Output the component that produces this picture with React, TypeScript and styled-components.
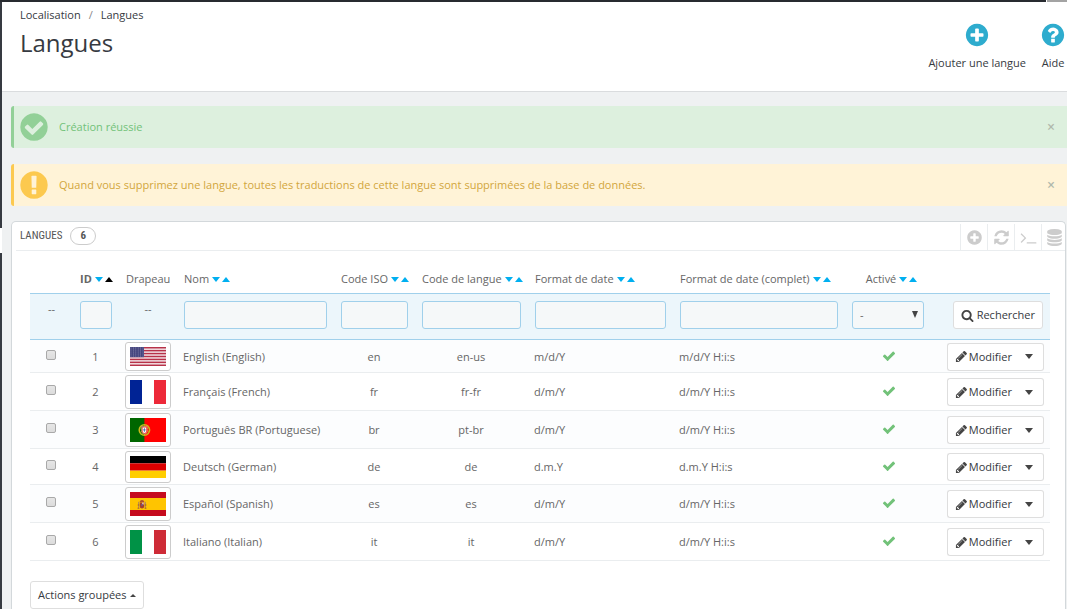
import React from "react";
import styled, { createGlobalStyle, css } from "styled-components";

const GlobalStyle = createGlobalStyle`
  *, *::before, *::after { box-sizing: border-box; }
  body {
    margin: 0;
    background: #eff1f2;
    color: #666;
    font: 11px/16px "Open Sans", "Noto Sans", sans-serif;
  }
  button, input, select { font: inherit; color: inherit; margin: 0; }
  a { color: inherit; text-decoration: none; }
`;

/* ---------- icons ---------- */

const DISC =
  "q0 209-103 385.5t-279.5 279.5-385.5 103-385.5-103-279.5-279.5-103-385.5 103-385.5 279.5-279.5 385.5-103 385.5 103 279.5 279.5 103 385.5z";

const ICONS = {
  plus:
    "M1344 960v-128q0-26-19-45t-45-19h-256v-256q0-26-19-45t-45-19h-128q-26 0-45 19t-19 45v256h-256q-26 0-45 19t-19 45v128q0 26 19 45t45 19h256v256q0 26 19 45t45 19h128q26 0 45-19t19-45v-256h256q26 0 45-19t19-45zm320-64" + DISC,
  question:
    "M1024 1376v-192q0-14-9-23t-23-9h-192q-14 0-23 9t-9 23v192q0 14 9 23t23 9h192q14 0 23-9t9-23zm256-672q0-88-55.5-163t-138.5-116-170-41q-243 0-371 213-15 24 8 42l132 100q7 6 19 6 16 0 25-12 53-68 86-92 34-24 86-24 48 0 85.5 26t37.5 59q0 38-20 61t-68 45q-63 28-115.5 86.5t-52.5 125.5v36q0 14 9 23t23 9h192q14 0 23-9t9-23q0-19 21.5-49.5t54.5-49.5q32-18 49-28.5t46-35 44.5-48 28-60.5 12.5-81zm384 192" + DISC,
  checkCircle:
    "M1412 734q0-28-18-46l-91-90q-19-19-45-19t-45 19l-408 407-226-226q-19-19-45-19t-45 19l-91 90q-18 18-18 46 0 27 18 45l362 362q19 19 45 19 27 0 46-19l543-543q18-18 18-45zm252 162" + DISC,
  exclamation:
    "M896 128q209 0 385.5 103t279.5 279.5 103 385.5-103 385.5-279.5 279.5-385.5 103-385.5-103-279.5-279.5-103-385.5 103-385.5 279.5-279.5 385.5-103zm128 1247v-190q0-14-9-23.5t-22-9.5h-192q-13 0-23 10t-10 23v190q0 13 10 23t23 10h192q13 0 22-9.5t9-23.5zm-2-344l18-621q0-12-10-18-10-8-24-8h-220q-14 0-24 8-10 6-10 18l17 621q0 10 10 17.5t24 7.5h185q14 0 23.5-7.5t10.5-17.5z",
  refresh:
    "M1639 1056q0 5-1 7-64 268-268 434.5t-478 166.5q-146 0-282.5-55t-243.5-157l-129 129q-19 19-45 19t-45-19-19-45v-448q0-26 19-45t45-19h448q26 0 45 19t19 45-19 45l-137 137q71 66 161 102t187 36q134 0 250-65t186-179q11-17 53-117 8-23 30-23h192q13 0 22.5 9.5t9.5 22.5zm25-800v448q0 26-19 45t-45 19h-448q-26 0-45-19t-19-45 19-45l138-138q-148-137-349-137-134 0-250 65t-186 179q-11 17-53 117-8 23-30 23h-199q-13 0-22.5-9.5t-9.5-22.5v-7q65-268 270-434.5t480-166.5q146 0 284 55.5t245 156.5l130-129q19-19 45-19t45 19 19 45z",
  terminal:
    "M649 983l-466 466q-10 10-23 10t-23-10l-50-50q-10-10-10-23t10-23l393-393-393-393q-10-10-10-23t10-23l50-50q10-10 23-10t23 10l466 466q10 10 10 23t-10 23zm1079 457v64q0 14-9 23t-23 9h-960q-14 0-23-9t-9-23v-64q0-14 9-23t23-9h960q14 0 23 9t9 23z",
  database:
    "M896 768q237 0 443-43t325-127v170q0 69-103 128t-280 93.5-385 34.5-385-34.5-280-93.5-103-128v-170q119 84 325 127t443 43zm0 768q237 0 443-43t325-127v170q0 69-103 128t-280 93.5-385 34.5-385-34.5-280-93.5-103-128v-170q119 84 325 127t443 43zm0-384q237 0 443-43t325-127v170q0 69-103 128t-280 93.5-385 34.5-385-34.5-280-93.5-103-128v-170q119 84 325 127t443 43zm0-1152q208 0 385 34.5t280 93.5 103 128v128q0 69-103 128t-280 93.5-385 34.5-385-34.5-280-93.5-103-128v-128q0-69 103-128t280-93.5 385-34.5z",
  search:
    "M1216 832q0-185-131.5-316.5t-316.5-131.5-316.5 131.5-131.5 316.5 131.5 316.5 316.5 131.5 316.5-131.5 131.5-316.5zm512 832q0 52-38 90t-90 38q-54 0-90-38l-343-342q-179 124-399 124-143 0-273.5-55.5t-225-150-150-225-55.5-273.5 55.5-273.5 150-225 225-150 273.5-55.5 273.5 55.5 225 150 150 225 55.5 273.5q0 220-124 399l343 343q37 37 37 90z",
  pencil:
    "M491 1536l91-91-235-235-91 91v107h128v128h107zm523-928q0-22-22-22-10 0-17 7l-542 542q-7 7-7 17 0 22 22 22 10 0 17-7l542-542q7-7 7-17zm-54-192l416 416-832 832h-416v-416zm683 96q0 53-37 90l-166 166-416-416 166-165q36-38 90-38 53 0 91 38l235 234q37 39 37 91z",
  check:
    "M1671 566q0 40-28 68l-724 724-136 136q-28 28-68 28t-68-28l-136-136-362-362q-28-28-28-68t28-68l136-136q28-28 68-28t68 28l294 295 656-657q28-28 68-28t68 28l136 136q28 28 28 68z",
};

const IconSvg = styled.svg`
  display: block;
  flex: none;
  fill: currentColor;
`;

function Icon({ name, size }: { name: keyof typeof ICONS; size: number }) {
  return (
    <IconSvg width={size} height={size} viewBox="0 0 1792 1792" aria-hidden="true">
      <path d={ICONS[name]} />
    </IconSvg>
  );
}

function Caret({ up, width = 8, height = 5 }: { up?: boolean; width?: number; height?: number }) {
  return (
    <IconSvg width={width} height={height} viewBox="0 0 8 4" preserveAspectRatio="none" aria-hidden="true">
      <path d={up ? "M0 4L4 0L8 4z" : "M0 0H8L4 4z"} />
    </IconSvg>
  );
}

/* ---------- page frame ---------- */

const Page = styled.div`
  display: flex;
  flex-direction: column;
  min-height: 100vh;
`;

const TopBar = styled.div`
  display: flex;
  justify-content: flex-end;
  height: 2px;
  background: #282b30;
`;

const TopBarEnd = styled.div`
  width: 21px;
  background: #a3a3a3;
  border-left: 1px solid #fff;
`;

const Body = styled.div`
  flex: 1;
  display: flex;
`;

const Rail = styled.div`
  flex: none;
  width: 2px;
  display: flex;
  flex-direction: column;
  background: #363a41;
`;

const RailMarker = styled.div`
  height: 25px;
  margin-top: 226px;
  background: #fff;
`;

const Main = styled.div`
  flex: 1;
  min-width: 0;
  display: flex;
  flex-direction: column;
`;

const Header = styled.header`
  display: flex;
  justify-content: space-between;
  height: 90px;
  padding: 5px 1px 0 18px;
  background: #fff;
  border-bottom: 1px solid #dadcde;
  color: #363a41;
`;

const Breadcrumb = styled.nav`
  display: flex;
  gap: 8px;
`;

const Slash = styled.span`
  color: #888;
`;

const Title = styled.h1`
  margin: 4px 0 0;
  font-size: 24px;
  line-height: 32px;
  font-weight: 400;
`;

const HeaderActions = styled.div`
  display: flex;
  align-items: flex-start;
  gap: 14px;
  padding-top: 15px;
`;

const HeaderAction = styled.a`
  display: flex;
  flex-direction: column;
  align-items: center;
  gap: 7px;
  svg { color: #2eacce; }
`;

const Content = styled.main`
  flex: 1;
  display: flex;
  flex-direction: column;
  padding: 14px 0 0 9px;
`;

/* ---------- alerts ---------- */

const tones = {
  success: css`
    background: #ddf0de;
    border-color: #92d097;
    color: #72c279;
    > svg { color: #92d097; }
  `,
  warning: css`
    background: #fff3d7;
    border-color: #fcc94f;
    color: #d2a63c;
    > svg { color: #fcc94f; }
  `,
};

const Alerts = styled.div`
  display: grid;
  gap: 16px;
  margin-bottom: 15px;
`;

const AlertBox = styled.div<{ $tone: keyof typeof tones }>`
  display: flex;
  align-items: center;
  height: 42px;
  padding: 0 10px 0 4px;
  border-left: 3px solid;
  border-radius: 3px 0 0 3px;
  ${(p) => tones[p.$tone]}
`;

const AlertText = styled.p`
  flex: 1;
  margin: 0 0 0 9px;
`;

const CloseButton = styled.button`
  width: 12px;
  height: 16px;
  padding: 0;
  border: 0;
  background: none;
  color: #b0b8ac;
  font-size: 14px;
  font-weight: 600;
  line-height: 16px;
`;

/* ---------- panel ---------- */

const Panel = styled.section`
  flex: 1;
  margin-right: 1px;
  padding: 0 0 0 4px;
  background: #fff;
  border: 1px solid #d3d8db;
  border-bottom: 0;
  border-radius: 5px 5px 0 0;
`;

const PanelHeading = styled.div`
  display: flex;
  align-items: stretch;
  height: 29px;
  padding-left: 4px;
  border-bottom: 1px solid #eaedef;
`;

const PanelTitle = styled.h2`
  flex: 1;
  display: flex;
  align-items: center;
  gap: 8px;
  margin: 0;
  color: #555;
  font: 400 11px/16px "Ubuntu Condensed", "Roboto Condensed", "Open Sans Condensed", Roboto, sans-serif;
`;

const Badge = styled.span`
  width: 26px;
  height: 18px;
  border: 1px solid #ccc;
  border-radius: 9px;
  font-weight: 700;
  text-align: center;
`;

const ToolButton = styled.button`
  display: flex;
  align-items: center;
  justify-content: center;
  width: 27px;
  margin-top: 2px;
  padding: 0;
  border: 0;
  border-left: 1px solid #eaedef;
  background: none;
  color: #ccc;
  &:last-child {
    width: 26px;
    margin-right: -2px;
  }
`;

/* ---------- table ---------- */

const TableWrap = styled.div`
  padding: 18px 15px 0 14px;
`;

const Table = styled.table`
  width: 100%;
  table-layout: fixed;
  border-collapse: separate;
  border-spacing: 0;
`;

const Col = styled.col<{ $w?: number }>`
  width: ${(p) => (p.$w ? `${p.$w}px` : "auto")};
`;

type Align = "left" | "center" | "right";

const HeadCell = styled.th<{ $align?: Align; $bold?: boolean }>`
  height: 25px;
  padding: 0 0 4px 7px;
  border-bottom: 1px solid #a0d0eb;
  font-weight: ${(p) => (p.$bold ? 700 : 400)};
  text-align: ${(p) => p.$align || "left"};
  white-space: nowrap;
`;

const HeadLabel = styled.span`
  display: inline-flex;
  align-items: center;
`;

const SortLink = styled.a<{ $active?: boolean }>`
  margin-left: 3px;
  color: ${(p) => (p.$active ? "#000" : "#00aff0")};
  & + & { margin-left: 2px; }
`;

const FilterCell = styled.td<{ $align?: Align }>`
  height: 46px;
  padding: 7px 7px 10px;
  background: #ecf6fb;
  border-bottom: 1px solid #a0d0eb;
  text-align: ${(p) => p.$align || "left"};
  vertical-align: top;
`;

const fieldStyle = css`
  display: block;
  width: 100%;
  height: 28px;
  padding: 0 7px;
  background: #f5f8f9;
  border: 1px solid #a0d0eb;
  border-radius: 3px;
  outline: 0;
`;

const FilterInput = styled.input`
  ${fieldStyle}
`;

const SelectWrap = styled.div`
  position: relative;
  svg {
    position: absolute;
    right: 6px;
    top: 10px;
    color: #444;
    pointer-events: none;
  }
`;

const FilterSelect = styled.select`
  ${fieldStyle}
  appearance: none;
`;

const Row = styled.tr`
  &:nth-child(odd) td { background: #fcfdfe; }
`;

const Cell = styled.td<{ $align?: Align }>`
  padding: 2px 7px 1px 6px;
  border-bottom: 1px solid #eaedef;
  text-align: ${(p) => p.$align || "left"};
  vertical-align: middle;
  white-space: nowrap;
`;

const CheckBox = styled.input`
  display: block;
  appearance: none;
  width: 10px;
  height: 10px;
  margin: 0 auto 4px 10px;
  border: 1px solid #a9a9a9;
  border-radius: 2px;
  background: linear-gradient(#e6e6e6, #dcdcdc);
`;

const Thumb = styled.span`
  display: block;
  width: 46px;
  padding: 4px;
  border: 1px solid #ccc;
  border-radius: 3px;
  background: #fff;
  svg { display: block; }
`;

const Status = styled.span`
  display: flex;
  justify-content: center;
  padding: 0 0 2px 2px;
  color: #72c279;
`;

const Button = styled.button`
  display: inline-flex;
  align-items: center;
  gap: 3px;
  height: 28px;
  padding: 0 7px;
  border: 1px solid #dedede;
  border-radius: 3px;
  background: #fff;
  color: #363a41;
  white-space: nowrap;
  vertical-align: top;
  svg { color: #444; }
`;

const ButtonGroup = styled.div`
  display: flex;
  justify-content: flex-end;
  margin-right: -1px;
`;

const GroupMain = styled(Button)`
  gap: 1px;
  border-right: 0;
  border-radius: 3px 0 0 3px;
`;

const GroupToggle = styled(Button)`
  padding: 0 10px 0 6px;
  border-left: 0;
  border-radius: 0 3px 3px 0;
`;

const Footer = styled.div`
  padding: 20px 0 0 14px;
`;

/* ---------- flags ---------- */

function FlagUs() {
  return (
    <svg width="36" height="19" viewBox="0 0 36 19" aria-hidden="true">
      <rect width="36" height="19" fill="#f3e4e8" />
      {[0, 1, 2, 3, 4, 5, 6].map((i) => (
        <rect key={i} y={(i * 2 * 19) / 13} width="36" height={19 / 13} fill="#b73249" />
      ))}
      <rect width="14" height="10.2" fill="#46467f" />
      {[1, 3, 5, 7, 9].map((y) =>
        [1, 3.4, 5.8, 8.2, 10.6, 13].map((x) => (
          <circle key={`${x}-${y}`} cx={x} cy={y} r="0.45" fill="#b9b9d2" />
        ))
      )}
    </svg>
  );
}

function Tricolour({ colours, vertical, height }: { colours: string[]; vertical?: boolean; height: number }) {
  return (
    <svg width="36" height={height} viewBox="0 0 3 3" preserveAspectRatio="none" aria-hidden="true">
      {colours.map((c, i) =>
        vertical ? (
          <rect key={c} x={i} width="1" height="3" fill={c} />
        ) : (
          <rect key={c} y={i} width="3" height="1" fill={c} />
        )
      )}
    </svg>
  );
}

function FlagPt() {
  return (
    <svg width="36" height="24" viewBox="0 0 36 24" aria-hidden="true">
      <rect width="36" height="24" fill="#f00" />
      <rect width="14.4" height="24" fill="#060" />
      <circle cx="14.4" cy="12" r="5.2" fill="none" stroke="#c9b81c" strokeWidth="1.5" />
      <path d="M9.6 10.5L19.2 13.5M9.8 14.5L19 9.5M14.4 6.8V17.2" stroke="#c9b81c" strokeWidth="0.6" />
      <path d="M11.6 8.6h5.6v4.4a2.8 3 0 0 1-5.6 0z" fill="#e23a30" stroke="#f3d5cf" strokeWidth="0.4" />
      <path d="M12.6 9.6h3.6v3.4a1.8 2 0 0 1-3.6 0z" fill="#fff" />
      <path d="M14.4 10.2v3.6M13.1 11.9h2.6" stroke="#3357a5" strokeWidth="0.8" />
    </svg>
  );
}

function FlagEs() {
  return (
    <svg width="36" height="24" viewBox="0 0 36 24" aria-hidden="true">
      <rect width="36" height="24" fill="#c60b1e" />
      <rect y="6" width="36" height="12" fill="#ffc400" />
      <path d="M8.6 9.8v6.2M15.4 9.8v6.2" stroke="#b08c52" strokeWidth="1" />
      <path d="M7.6 16.2h1.8M14.6 16.2h1.8M7.7 13h1.6M14.8 13h1.6" stroke="#a5542f" strokeWidth="1" />
      <path d="M9.8 9.2q2.2-2.6 4.4 0v1H9.8z" fill="#b0502c" />
      <path d="M9.8 10.4h4.4v3.9a2.2 2.3 0 0 1-4.4 0z" fill="#a5402c" />
      <path d="M12 10.6h1.9v2H12z" fill="#d9b0a4" />
      <circle cx="12" cy="13" r="0.9" fill="#6d5a8c" />
    </svg>
  );
}

const GERMANY = ["#000", "#d00", "#ffce00"];
const FRANCE = ["#002395", "#fff", "#ed2939"];
const ITALY = ["#009246", "#fff", "#ce2b37"];

/* ---------- data ---------- */

const languages = [
  { id: 1, flag: <FlagUs />, name: "English (English)", iso: "en", code: "en-us", date: "m/d/Y" },
  { id: 2, flag: <Tricolour colours={FRANCE} vertical height={24} />, name: "Français (French)", iso: "fr", code: "fr-fr", date: "d/m/Y" },
  { id: 3, flag: <FlagPt />, name: "Português BR (Portuguese)", iso: "br", code: "pt-br", date: "d/m/Y" },
  { id: 4, flag: <Tricolour colours={GERMANY} height={22} />, name: "Deutsch (German)", iso: "de", code: "de", date: "d.m.Y" },
  { id: 5, flag: <FlagEs />, name: "Español (Spanish)", iso: "es", code: "es", date: "d/m/Y" },
  { id: 6, flag: <Tricolour colours={ITALY} vertical height={24} />, name: "Italiano (Italian)", iso: "it", code: "it", date: "d/m/Y" },
];

function Alert({ tone, children }: { tone: keyof typeof tones; children: React.ReactNode }) {
  return (
    <AlertBox $tone={tone} role="alert">
      <Icon name={tone === "success" ? "checkCircle" : "exclamation"} size={32} />
      <AlertText>{children}</AlertText>
      <CloseButton type="button" aria-label="Fermer">×</CloseButton>
    </AlertBox>
  );
}

function Heading({ label, align, sorted }: { label: string; align?: Align; sorted?: boolean }) {
  return (
    <HeadCell $align={align} $bold={sorted} scope="col">
      <HeadLabel>
        {label}
        <SortLink href="#desc" aria-label={`${label} décroissant`}><Caret /></SortLink>
        <SortLink href="#asc" $active={sorted} aria-label={`${label} croissant`}><Caret up /></SortLink>
      </HeadLabel>
    </HeadCell>
  );
}

export default function App() {
  return (
    <Page>
      <GlobalStyle />
      <TopBar><TopBarEnd /></TopBar>
      <Body>
        <Rail><RailMarker /></Rail>
        <Main>
          <Header>
            <div>
              <Breadcrumb>
                <a href="#localisation">Localisation</a>
                <Slash>/</Slash>
                <a href="#langues">Langues</a>
              </Breadcrumb>
              <Title>Langues</Title>
            </div>
            <HeaderActions>
              <HeaderAction href="#ajouter"><Icon name="plus" size={26} />Ajouter une langue</HeaderAction>
              <HeaderAction href="#aide"><Icon name="question" size={26} />Aide</HeaderAction>
            </HeaderActions>
          </Header>
          <Content>
            <Alerts>
              <Alert tone="success">Création réussie</Alert>
              <Alert tone="warning">
                Quand vous supprimez une langue, toutes les traductions de cette langue sont supprimées de la base de données.
              </Alert>
            </Alerts>
            <Panel>
              <PanelHeading>
                <PanelTitle>LANGUES <Badge>6</Badge></PanelTitle>
                <ToolButton type="button" aria-label="Ajouter"><Icon name="plus" size={17} /></ToolButton>
                <ToolButton type="button" aria-label="Rafraîchir"><Icon name="refresh" size={17} /></ToolButton>
                <ToolButton type="button" aria-label="Requête SQL"><Icon name="terminal" size={17} /></ToolButton>
                <ToolButton type="button" aria-label="Exporter"><Icon name="database" size={17} /></ToolButton>
              </PanelHeading>
              <TableWrap>
                <Table>
                  <colgroup>
                    <Col $w={43} /><Col $w={46} /><Col $w={58} /><Col /><Col $w={81} />
                    <Col $w={113} /><Col $w={145} /><Col $w={172} /><Col $w={86} /><Col $w={119} />
                  </colgroup>
                  <thead>
                    <tr>
                      <HeadCell />
                      <Heading label="ID" sorted />
                      <HeadCell scope="col">Drapeau</HeadCell>
                      <Heading label="Nom" />
                      <Heading label="Code ISO" />
                      <Heading label="Code de langue" />
                      <Heading label="Format de date" />
                      <Heading label="Format de date (complet)" />
                      <Heading label="Activé" align="center" />
                      <HeadCell />
                    </tr>
                    <tr>
                      <FilterCell $align="center">--</FilterCell>
                      <FilterCell><FilterInput aria-label="ID" /></FilterCell>
                      <FilterCell $align="center">--</FilterCell>
                      <FilterCell><FilterInput aria-label="Nom" /></FilterCell>
                      <FilterCell><FilterInput aria-label="Code ISO" /></FilterCell>
                      <FilterCell><FilterInput aria-label="Code de langue" /></FilterCell>
                      <FilterCell><FilterInput aria-label="Format de date" /></FilterCell>
                      <FilterCell><FilterInput aria-label="Format de date (complet)" /></FilterCell>
                      <FilterCell>
                        <SelectWrap>
                          <FilterSelect aria-label="Activé"><option>-</option></FilterSelect>
                          <Caret width={6} height={7} />
                        </SelectWrap>
                      </FilterCell>
                      <FilterCell $align="right">
                        <Button type="button"><Icon name="search" size={13} />Rechercher</Button>
                      </FilterCell>
                    </tr>
                  </thead>
                  <tbody>
                    {languages.map((l) => (
                      <Row key={l.id}>
                        <Cell $align="center"><CheckBox type="checkbox" aria-label={l.name} /></Cell>
                        <Cell $align="center">{l.id}</Cell>
                        <Cell><Thumb>{l.flag}</Thumb></Cell>
                        <Cell>{l.name}</Cell>
                        <Cell $align="center">{l.iso}</Cell>
                        <Cell $align="center">{l.code}</Cell>
                        <Cell>{l.date}</Cell>
                        <Cell>{l.date} H:i:s</Cell>
                        <Cell><Status role="img" aria-label="Activé"><Icon name="check" size={14} /></Status></Cell>
                        <Cell>
                          <ButtonGroup>
                            <GroupMain type="button"><Icon name="pencil" size={13} />Modifier</GroupMain>
                            <GroupToggle type="button" aria-label="Plus d'actions"><Caret /></GroupToggle>
                          </ButtonGroup>
                        </Cell>
                      </Row>
                    ))}
                  </tbody>
                </Table>
              </TableWrap>
              <Footer>
                <Button type="button">Actions groupées <Caret up width={6} height={3} /></Button>
              </Footer>
            </Panel>
          </Content>
        </Main>
      </Body>
    </Page>
  );
}
